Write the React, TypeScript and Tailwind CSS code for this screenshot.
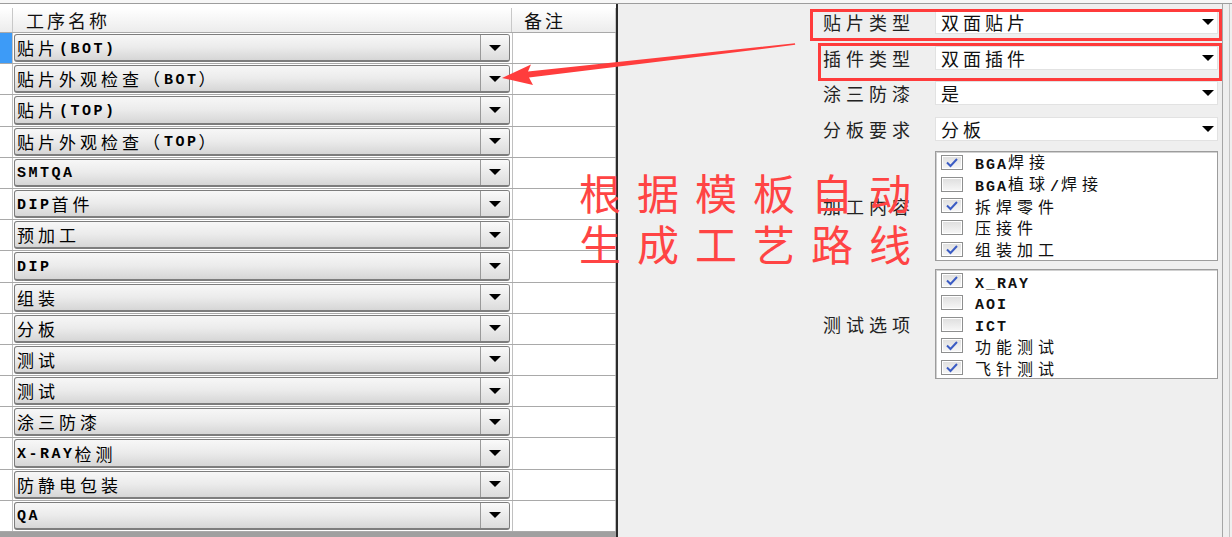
import React from 'react';

const STEPS = [
  '贴片(BOT)',
  '贴片外观检查（ BOT ）',
  '贴片(TOP)',
  '贴片外观检查（ TOP ）',
  'SMTQA',
  'DIP首件',
  '预加工',
  'DIP',
  '组装',
  '分板',
  '测试',
  '测试',
  '涂三防漆',
  'X-RAY检测',
  '防静电包装',
  'QA',
];

const SELECTS = [
  { label: '贴片类型', value: '双面贴片' },
  { label: '插件类型', value: '双面插件' },
  { label: '涂三防漆', value: '是' },
  { label: '分板要求', value: '分板' },
];

const PROCESS = [
  { text: 'BGA焊接', on: true },
  { text: 'BGA植球/焊接', on: false },
  { text: '拆焊零件', on: true },
  { text: '压接件', on: false },
  { text: '组装加工', on: true },
];

const TESTS = [
  { text: 'X_RAY', on: true },
  { text: 'AOI', on: false },
  { text: 'ICT', on: false },
  { text: '功能测试', on: true },
  { text: '飞针测试', on: true },
];

// latin runs in a bold mono face, CJK runs in Noto
function Mixed({ text, cjk, latin }: { text: string; cjk: string; latin: string }) {
  const parts = text.match(/[\x00-\x7f]+|[^\x00-\x7f]+/g) ?? [];
  return (
    <>
      {parts.map((p, i) =>
        /^[\x00-\x7f]+$/.test(p) ? (
          <span key={i} className={`relative top-[1.5px] ${latin}`}>{p}</span>
        ) : (
          <span key={i} className={cjk}>{p}</span>
        ),
      )}
    </>
  );
}

function Caret() {
  return (
    <svg width="12" height="6" viewBox="0 0 12 6">
      <path d="M0 0h12L6 6z" fill="#000" />
    </svg>
  );
}

function Check({ on }: { on: boolean }) {
  return (
    <div className="flex h-[15px] w-[22px] shrink-0 items-center justify-center border border-[#8e8f8f] bg-gradient-to-b from-[#dedede] to-[#f7f7f7] shadow-[inset_0_0_0_1px_#fff]">
      {on && (
        <svg width="14" height="11" viewBox="0 0 14 11">
          <path d="M2 5.5l3.5 3.5L12 2" stroke="#3b5cc4" strokeWidth="2" fill="none" />
        </svg>
      )}
    </div>
  );
}

function CheckList({ items }: { items: { text: string; on: boolean }[] }) {
  return (
    <div className="flex flex-col border border-[#9c9c9c] bg-white pl-[5px] shadow-[inset_1px_1px_0_#d0d0d0]">
      {items.map((it) => (
        <div key={it.text} className="flex h-[21.7px] items-center gap-[12px]">
          <Check on={it.on} />
          <span className="whitespace-nowrap text-[#111]">
            <Mixed
              text={it.text}
              cjk="font-['Noto_Sans_CJK_SC',sans-serif] text-[16px] tracking-[5px]"
              latin="font-['Liberation_Mono',monospace] font-bold text-[15px] tracking-[2px]"
            />
          </span>
        </div>
      ))}
    </div>
  );
}

export default function App() {
  return (
    <div className="relative h-[537px] w-[1232px] overflow-hidden bg-[#efefef] font-['Noto_Sans_CJK_SC',sans-serif] leading-none">
      <div className="h-[3px] bg-[#f7f7f7]" />
      <div className="h-px bg-[#9d9d9d]" />

      <div className="flex h-[533px]">
        {/* process grid */}
        <div className="flex w-[616px] flex-col bg-[#a0a0a0]">
          <div className="h-[4px] bg-white" />
          <div className="flex h-[25px] border-b border-[#a9a9a9] bg-gradient-to-b from-white to-[#ececec]">
            <div className="w-[13px] border-r border-[#c8c8c8]" />
            <div className="flex w-[499px] items-center border-r border-[#c8c8c8] pl-[13px] text-[18px] tracking-[3px] text-[#111]">
              工序名称
            </div>
            <div className="flex flex-1 items-center border-r border-[#c8c8c8] pl-[12px] text-[18px] tracking-[3px] text-[#111]">
              备注
            </div>
          </div>
          {STEPS.map((s, i) => (
            <div key={i} className="flex h-[31.2px] border-b border-[#a9a9a9] bg-white">
              <div className={`w-[13px] border-r border-[#c0c0c0] ${i === 0 ? 'bg-[#3d9bf7]' : 'bg-white'}`} />
              <div className="flex w-[499px] items-stretch py-[1px] pl-[1px] pr-[2px]">
                <div className="flex w-full items-stretch overflow-hidden rounded-[3px] border border-b-2 border-[#7d7d7d] bg-gradient-to-b from-[#f7f7f7] via-[#ebebeb] to-[#d6d6d6]">
                  <div className="flex flex-1 items-center whitespace-nowrap pl-[2px] text-black">
                    <Mixed
                      text={s}
                      cjk="font-['Noto_Sans_CJK_SC',sans-serif] text-[17px] tracking-[4px]"
                      latin="font-['Liberation_Mono',monospace] font-bold text-[15px] tracking-[2.5px]"
                    />
                  </div>
                  <div className="flex w-[29px] items-center justify-center border-l border-[#9a9a9a] bg-gradient-to-b from-[#fafafa] to-[#dcdcdc]">
                    <Caret />
                  </div>
                </div>
              </div>
              <div className="flex-1 border-l border-r border-[#c0c0c0] bg-white" />
            </div>
          ))}
        </div>

        <div className="w-[2px] bg-[#2b2b2b]" />

        {/* order options */}
        <div className="flex flex-1">
          <div className="flex w-[600px] flex-col pt-[6px] text-[#222]">
            <div className="flex flex-col gap-[11.5px]">
              {SELECTS.map((f) => (
                <div key={f.label} className="flex h-[24px] items-center">
                  <div className="w-[297px] text-right text-[18px] tracking-[5px]">{f.label}</div>
                  <div className="ml-[20px] flex h-full w-[283px] items-center justify-between border border-[#e2e2e2] bg-white pl-[5px] pr-[3px]">
                    <span className="text-[18px] tracking-[4px] text-[#111]">{f.value}</span>
                    <Caret />
                  </div>
                </div>
              ))}
            </div>

            <div className="mt-[10px] flex items-center">
              <div className="w-[297px] text-right text-[18px] tracking-[5px]">加工内容</div>
              <div className="ml-[20px] w-[283px]">
                <CheckList items={PROCESS} />
              </div>
            </div>

            <div className="mt-[8px] flex items-center">
              <div className="w-[297px] text-right text-[18px] tracking-[5px]">测试选项</div>
              <div className="ml-[20px] w-[283px]">
                <CheckList items={TESTS} />
              </div>
            </div>
          </div>
          <div className="ml-[4px] w-px bg-[#a6a6a6]" />
          <div className="ml-[6px] w-px bg-[#c4c4c4]" />
        </div>
      </div>

      {/* annotation overlay */}
      <div className="pointer-events-none absolute left-[810px] top-[9px] h-[32px] w-[412px] border-[3px] border-[#ff3b3b]" />
      <div className="pointer-events-none absolute left-[818px] top-[43px] h-[38px] w-[404px] border-[3px] border-[#ff3b3b]" />

      <svg className="pointer-events-none absolute left-0 top-0" width="1232" height="537">
        <polygon
          points="502,78 531,64.5 528,71.6 795,43.2 795.2,44.8 529,77.6 533,85"
          fill="#ff3d3d"
        />
      </svg>

      <div className="pointer-events-none absolute left-[579px] top-[166px] flex flex-col text-[42px] leading-[51px] tracking-[16px] text-[#ff4444]">
        <span>根据模板自动</span>
        <span>生成工艺路线</span>
      </div>
    </div>
  );
}
